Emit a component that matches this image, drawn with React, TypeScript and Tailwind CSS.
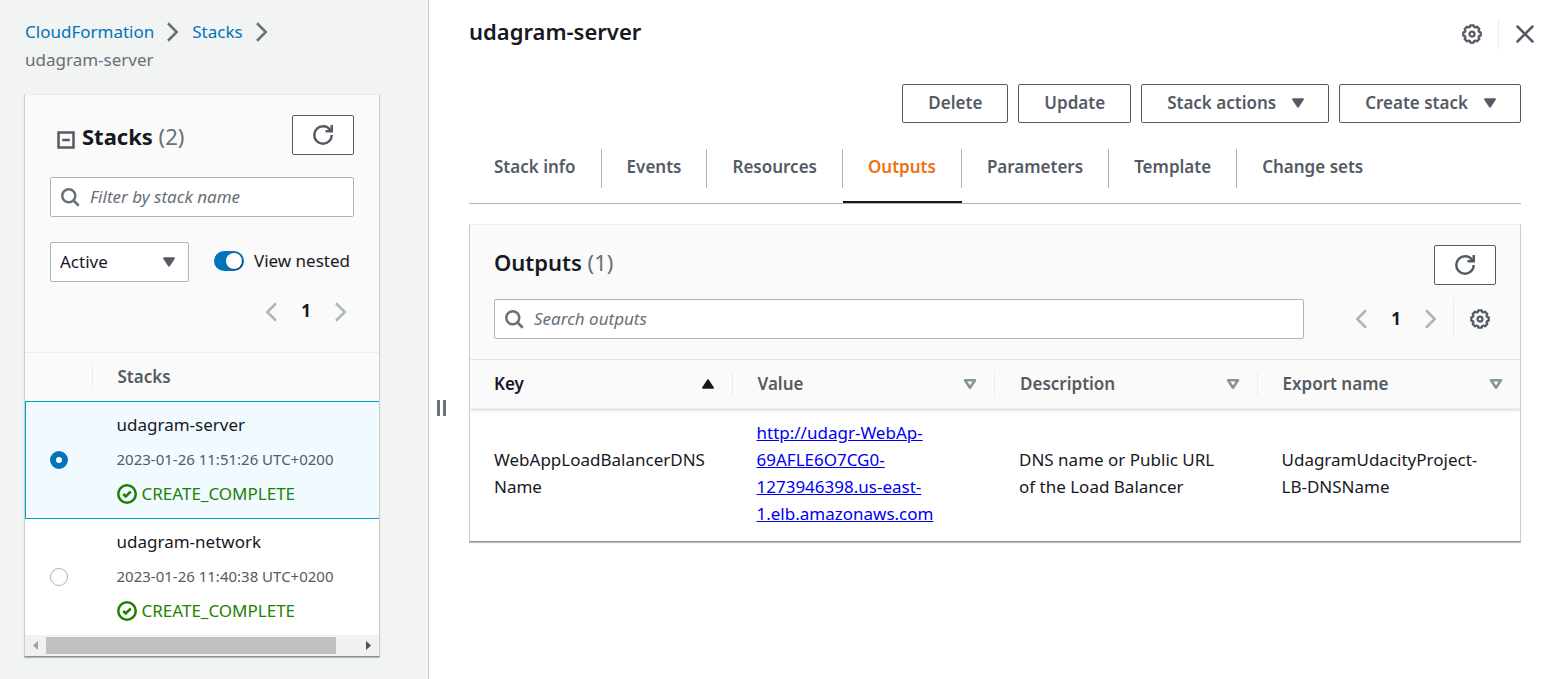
import type { ReactNode } from "react";

const stacks = [
  { name: "udagram-server", created: "2023-01-26 11:51:26 UTC+0200", status: "CREATE_COMPLETE", selected: true },
  { name: "udagram-network", created: "2023-01-26 11:40:38 UTC+0200", status: "CREATE_COMPLETE", selected: false },
];

const tabs = ["Stack info", "Events", "Resources", "Outputs", "Parameters", "Template", "Change sets"];

const columns = [
  { label: "Key", sorted: true },
  { label: "Value", sorted: false },
  { label: "Description", sorted: false },
  { label: "Export name", sorted: false },
];

// Outline of an eight-toothed cog on a 16-unit canvas.
const gearPoints = Array.from({ length: 8 }, (_, i) =>
  [
    [-17, 5.9],
    [-11, 7.1],
    [11, 7.1],
    [17, 5.9],
  ].map(([offset, r]) => {
    const a = ((i * 45 + offset) * Math.PI) / 180;
    return `${(8 + r * Math.sin(a)).toFixed(2)},${(8 - r * Math.cos(a)).toFixed(2)}`;
  }).join(" "),
).join(" ");

function Icon({ children, className = "size-5" }: { children: ReactNode; className?: string }) {
  return (
    <svg viewBox="0 0 16 16" fill="none" stroke="currentColor" strokeWidth="2" aria-hidden="true" className={`shrink-0 ${className}`}>
      {children}
    </svg>
  );
}

const Refresh = () => (
  <Icon>
    <path d="M10 5h5V0" />
    <path d="M15 8c0 3.9-3.1 7-7 7s-7-3.1-7-7 3.1-7 7-7c2.8 0 5.2 1.6 6.3 4" />
  </Icon>
);
const Gear = () => (
  <Icon>
    <polygon points={gearPoints} strokeWidth="1.8" strokeLinejoin="round" />
    <circle cx="8" cy="8" r="2" strokeWidth="1.8" />
  </Icon>
);
const Search = () => (
  <Icon>
    <circle cx="7" cy="7" r="5.2" />
    <path d="M10.8 10.8 15 15" />
  </Icon>
);
const Close = () => (
  <Icon>
    <path d="m2 2 12 12M14 2 2 14" strokeLinecap="round" />
  </Icon>
);
const ChevronRight = () => (
  <Icon>
    <path d="m4 1 7 7-7 7" />
  </Icon>
);
const ChevronLeft = () => (
  <Icon>
    <path d="M12 1 5 8l7 7" />
  </Icon>
);
const CaretDown = () => (
  <Icon>
    <path d="M4 5h8l-4 6z" fill="currentColor" strokeLinejoin="round" strokeWidth="1.5" />
  </Icon>
);
const CaretUp = () => (
  <Icon>
    <path d="M4 11h8L8 5z" fill="currentColor" strokeLinejoin="round" strokeWidth="1.5" />
  </Icon>
);
const CaretOutline = () => (
  <Icon>
    <path d="M4 5h8l-4 6z" strokeLinejoin="round" strokeWidth="2" />
  </Icon>
);
const Check = () => (
  <Icon>
    <circle cx="8" cy="8" r="7" />
    <path d="m5 8 2 2 4-4" />
  </Icon>
);

function RefreshButton({ label }: { label: string }) {
  return (
    <button type="button" aria-label={label} className="flex h-10 w-[62px] items-center justify-center rounded-[2px] border border-[#545b64] bg-white text-[#545b64]">
      <Refresh />
    </button>
  );
}

function SearchField({ placeholder }: { placeholder: string }) {
  return (
    <label className="flex h-10 min-w-0 flex-1 items-center gap-2.5 rounded-[2px] border border-[#aab7b8] bg-white px-[9px] text-[#687078]">
      <Search />
      <input
        type="search"
        aria-label={placeholder}
        placeholder={placeholder}
        className="min-w-0 flex-1 bg-transparent pb-0.5 outline-none placeholder:text-[#687078] placeholder:italic placeholder:opacity-100"
      />
    </label>
  );
}

function Pager() {
  return (
    <nav aria-label="Pagination" className="flex items-center text-[#aab7b8]">
      <button type="button" aria-label="Previous page" className="flex w-5 justify-center">
        <ChevronLeft />
      </button>
      <button type="button" className="w-[50px] pb-0.5 leading-[25px] font-bold text-[#16191f]">
        1
      </button>
      <button type="button" aria-label="Next page" className="flex w-5 justify-center">
        <ChevronRight />
      </button>
    </nav>
  );
}

function ActionButton({ children, menu = false }: { children: ReactNode; menu?: boolean }) {
  return (
    <button
      type="button"
      className={`flex h-[39px] items-center gap-3 rounded-[2px] border border-[#545b64] bg-white pb-0.5 font-semibold text-[#545b64] ${menu ? "pr-5 pl-[25px]" : "px-[25px]"}`}
    >
      {children}
      {menu && <CaretDown />}
    </button>
  );
}

function StacksPanel() {
  return (
    <section className="rounded-[1px] border border-t-[#eaeded] border-r-[#c9d0d1] border-b-[#879596] border-l-[#c9d0d1] bg-[#fafafa] shadow-[0_1px_1px_0_rgba(0,28,36,0.3)]">
      <div className="px-[25px] pt-5 pb-[27px]">
        <div className="flex justify-between">
          <h2 className="flex h-[42px] items-center pl-1.5 text-[22px] font-bold">
            <button type="button" aria-label="Collapse stacks" className="mt-2 mr-1.5 text-[#545b64]">
              <Icon>
                <path d="M2 2h12v12H2zM5 8h6" />
              </Icon>
            </button>
            <span>
              Stacks <span className="font-normal text-[#687078]">(2)</span>
            </span>
          </h2>
          <RefreshButton label="Refresh stacks" />
        </div>
        <div className="mt-5 flex">
          <SearchField placeholder="Filter by stack name" />
        </div>
        <div className="mt-[25px] flex items-center justify-between">
          <div className="relative">
            <select aria-label="Stack status" className="h-10 w-[139px] appearance-none rounded-[2px] border border-[#aab7b8] bg-white pb-0.5 pl-[9px] outline-none">
              <option>Active</option>
            </select>
            <span className="pointer-events-none absolute top-2.5 right-2.5 text-[#545b64]">
              <CaretDown />
            </span>
          </div>
          <label className="flex items-center gap-2.5 pr-1 pb-0.5">
            <input
              type="checkbox"
              role="switch"
              defaultChecked
              className="flex h-5 w-[30px] appearance-none items-center rounded-full bg-[#879596] px-0.5 before:size-4 before:rounded-full before:bg-white before:shadow-[1px_1px_1px_rgba(0,0,0,0.35)] checked:justify-end checked:bg-[#0073bb]"
            />
            <span className="pb-0.5">View nested</span>
          </label>
        </div>
        <div className="mt-4 flex justify-end pr-[3px]">
          <Pager />
        </div>
      </div>
      <table className="w-full border-collapse border-t border-[#eaeded] text-left">
        <thead>
          <tr>
            <th scope="col" aria-label="Selection" className="w-[67px] py-3">
              <div className="h-6 border-r border-[#eaeded]" />
            </th>
            <th scope="col" className="h-12 px-[25px] pb-0.5 font-semibold text-[#545b64]">
              Stacks
            </th>
          </tr>
        </thead>
        <tbody>
          {stacks.map((s) => (
            <tr key={s.name} className={s.selected ? "border border-r-0 border-[#00a1c9] bg-[#f1faff]" : "bg-white"}>
              <td className="pl-6">
                <input
                  type="radio"
                  name="stack"
                  aria-label={s.name}
                  defaultChecked={s.selected}
                  className="block size-[18px] appearance-none rounded-full border border-[#aab7b8] bg-white checked:border-[6px] checked:border-[#0073bb]"
                />
              </td>
              <td className="px-6 pt-[9px] pb-[11px]">
                <div>{s.name}</div>
                <div className="mt-2 text-[15px] leading-[26px] text-[#545b64]">{s.created}</div>
                <div className="mt-2 flex items-center gap-[5px] text-[#1d8102]">
                  <Check />
                  {s.status}
                </div>
              </td>
            </tr>
          ))}
        </tbody>
      </table>
      <div className="flex h-[21px] items-center bg-[#f1f1f1]">
        <svg viewBox="0 0 21 21" className="size-[21px] shrink-0 fill-[#a3a3a3]" aria-hidden="true">
          <path d="M13 6v9l-5-4.500z" />
        </svg>
        <div className="flex-1">
          <div className="h-[17px] w-[93%] bg-[#c1c1c1]" />
        </div>
        <svg viewBox="0 0 21 21" className="size-[21px] shrink-0 fill-[#505050]" aria-hidden="true">
          <path d="M8 6v9l5-4.500z" />
        </svg>
      </div>
    </section>
  );
}

function OutputsPanel() {
  return (
    <section className="mt-5 overflow-hidden rounded-[1px] border border-t-[#eaeded] border-r-[#c9d0d1] border-b-[#879596] border-l-[#c9d0d1] bg-[#fafafa] shadow-[0_1px_1px_0_rgba(0,28,36,0.3)]">
      <div className="px-6 pt-5 pb-5">
        <div className="flex justify-between">
          <h2 className="text-[22px] leading-[34px] font-semibold">
            Outputs <span className="font-normal text-[#687078]">(1)</span>
          </h2>
          <RefreshButton label="Refresh outputs" />
        </div>
        <div className="mt-3.5 flex items-center">
          <SearchField placeholder="Search outputs" />
          <div className="ml-[47px]">
            <Pager />
          </div>
          <div className="ml-3 flex h-10 items-center border-l border-[#eaeded] pr-1.5 pl-4">
            <button type="button" aria-label="Table preferences" className="text-[#545b64]">
              <Gear />
            </button>
          </div>
        </div>
      </div>
      <table className="w-full table-fixed border-separate border-spacing-0 border-t border-[#eaeded] text-left">
        <thead className="relative z-10 shadow-[0_1px_3px_rgba(0,28,36,0.2)]">
          <tr>
            {columns.map((c, i) => (
              <th key={c.label} scope="col" className="h-[49px] border-b border-[#eaeded] bg-[#fafafa] p-0">
                <button
                  type="button"
                  className={`flex h-6 w-full items-center justify-between pr-[14px] font-semibold ${i === 0 ? "pl-6" : "pl-[25px]"} ${
                    i < columns.length - 1 ? "border-r border-[#eaeded]" : ""
                  } ${c.sorted ? "text-[#16191f]" : "text-[#545b64]"}`}
                >
                  <span className="pb-0.5">{c.label}</span>
                  <span className={c.sorted ? "text-[#16191f]" : "text-[#879596]"}>{c.sorted ? <CaretUp /> : <CaretOutline />}</span>
                </button>
              </th>
            ))}
          </tr>
        </thead>
        <tbody>
          <tr className="bg-white">
            <td className="px-6 pt-2.5 pb-3.5">
              WebAppLoadBalancerDNS
              <wbr />
              Name
            </td>
            <td className="px-6 pt-2.5 pb-3.5">
              <a href="http://udagr-WebAp-69AFLE6O7CG0-1273946398.us-east-1.elb.amazonaws.com" className="text-[#0000ee] underline">
                http://udagr-WebAp-
                <br />
                69AFLE6O7CG0-
                <br />
                1273946398.us-east-
                <br />
                1.elb.amazonaws.com
              </a>
            </td>
            <td className="px-6 pt-2.5 pb-3.5">
              DNS name or Public URL
              <br />
              of the Load Balancer
            </td>
            <td className="px-6 pt-2.5 pb-3.5">
              UdagramUdacityProject-
              <br />
              LB-DNSName
            </td>
          </tr>
        </tbody>
      </table>
    </section>
  );
}

export default function App() {
  return (
    <div className="flex min-h-screen bg-white font-['Noto_Sans',sans-serif] text-[17px] leading-[27px] text-[#16191f]">
      <aside className="w-[429px] shrink-0 border-r border-[#c4cbcc] bg-[#f2f3f3] pt-[18px] pr-12 pb-[22px] pl-6">
        <nav aria-label="Breadcrumb" className="mb-5 leading-7">
          <ol className="flex flex-wrap items-center pl-px">
            <li className="flex items-center text-[#687078]">
              <a href="#home" className="text-[#0073bb]">
                CloudFormation
              </a>
              <span className="mx-[9px]">
                <ChevronRight />
              </span>
            </li>
            <li className="flex items-center text-[#687078]">
              <a href="#stacks" className="text-[#0073bb]">
                Stacks
              </a>
              <span className="mx-[9px]">
                <ChevronRight />
              </span>
            </li>
            <li className="w-full text-[#687078]">udagram-server</li>
          </ol>
        </nav>
        <StacksPanel />
      </aside>
      <div role="separator" aria-orientation="vertical" className="mt-[400px] ml-2 flex h-4 w-8 shrink-0 gap-[3px]">
        <span className="w-[3px] bg-[#687078]" />
        <span className="w-[3px] bg-[#687078]" />
      </div>
      <main className="min-w-0 flex-1 pr-[25px]">
        <header className="flex items-start justify-between pt-[18px]">
          <h1 className="text-[22px] leading-[26px] font-semibold">udagram-server</h1>
          <div className="-mr-3.5 flex h-8 items-center text-[#545b64]">
            <button type="button" aria-label="Preferences" className="mr-4">
              <Gear />
            </button>
            <button type="button" aria-label="Close panel" className="flex h-[30px] items-center border-l border-[#eaeded] pl-4">
              <Close />
            </button>
          </div>
        </header>
        <div className="mt-[34px] flex justify-end gap-2.5">
          <ActionButton>Delete</ActionButton>
          <ActionButton>Update</ActionButton>
          <ActionButton menu>Stack actions</ActionButton>
          <ActionButton menu>Create stack</ActionButton>
        </div>
        <div role="tablist" className="mt-[26px] flex border-b border-[#aab7b8]">
          {tabs.map((t, i) => (
            <button
              key={t}
              type="button"
              role="tab"
              aria-selected={t === "Outputs"}
              className={`border-b-2 pb-[13px] font-semibold ${t === "Outputs" ? "border-[#16191f] text-[#ec7211]" : "border-transparent text-[#545b64]"}`}
            >
              <span className={`flex h-[39px] items-center px-[25px] pb-1 ${i < tabs.length - 1 ? "border-r border-[#aab7b8]" : ""}`}>{t}</span>
            </button>
          ))}
        </div>
        <OutputsPanel />
      </main>
    </div>
  );
}
